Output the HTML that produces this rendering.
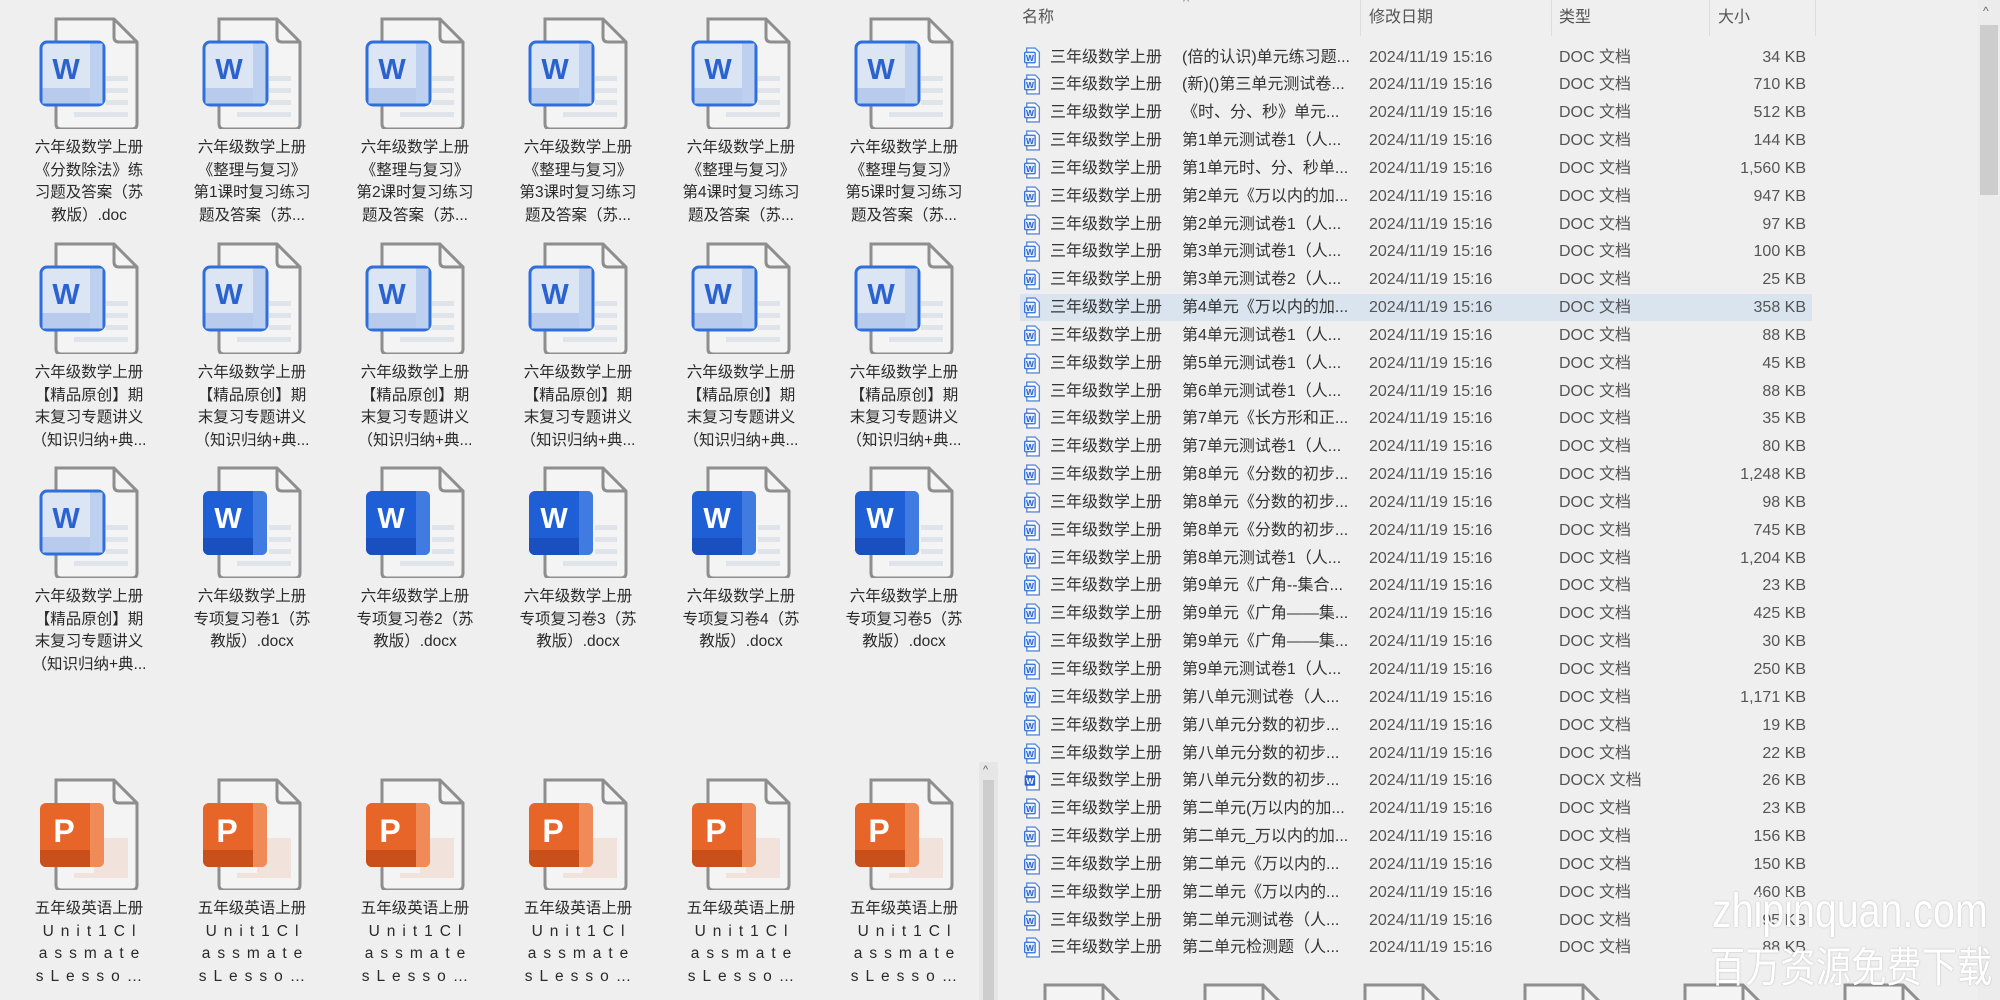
<!DOCTYPE html>
<html><head><meta charset="utf-8">
<style>
*{margin:0;padding:0;box-sizing:border-box}
html,body{width:2000px;height:1000px;overflow:hidden}
body{background:#efefef;font-family:"Liberation Sans","Noto Sans CJK SC",sans-serif;color:#222}
#wrap{position:relative;width:2000px;height:1000px;overflow:hidden}
.ic{position:absolute;width:110px;height:130px}
.lb{position:absolute;width:170px;text-align:center;font-size:15.5px;line-height:22.5px;color:#2a2a2a;white-space:nowrap}
.hd{position:absolute;top:8px;font-size:16px;color:#555;line-height:20px}
.sep{position:absolute;top:0;width:1px;height:36px;background:#dcdcdc}
.row{position:absolute;left:1020px;width:792px;height:27px;font-size:16px;color:#333}
.row span{position:absolute;top:3px;line-height:21px;height:21px;white-space:nowrap}
.row.sel{background:#d9e4ee}
.wm{position:absolute;color:#fff;text-shadow:0 0 2px rgba(0,0,0,.25);white-space:nowrap;transform-origin:0 0}
</style></head><body><div id="wrap">

<svg width="0" height="0" style="position:absolute">
<defs>
<g id="page"><path d="M22 20 H80 L103 43 V125 Q103 130 98 130 H27 Q22 130 22 125 Z" fill="#f4f4f4" stroke="#8e8e8e" stroke-width="3"/><path d="M80 20 V38 Q80 43 85 43 H103" fill="none" stroke="#8e8e8e" stroke-width="3"/></g>
<g id="lines"><rect x="72" y="77" width="22" height="5" fill="#dfe3ea"/><rect x="72" y="89" width="22" height="5" fill="#dfe3ea"/><rect x="72" y="101" width="22" height="5" fill="#dfe3ea"/><rect x="40" y="113" width="54" height="5" fill="#dfe3ea"/></g>
<g id="wold"><use href="#page"/><use href="#lines"/><rect x="7" y="43" width="63" height="63" rx="6" fill="#dbe5f4" stroke="#2f6fdc" stroke-width="3"/><rect x="8.5" y="89" width="60" height="15.5" fill="#b8cbed"/><rect x="56" y="44.5" width="12.5" height="60" fill="#bdd0ef"/><text x="32" y="80" text-anchor="middle" font-family="Liberation Sans" font-weight="bold" font-size="29" fill="#2a62cf">W</text></g>
<g id="wnew"><use href="#page"/><use href="#lines"/><rect x="6" y="43" width="64" height="64" rx="6" fill="#1f5fd6"/><rect x="6" y="90" width="64" height="17" rx="6" fill="#1a4fc0"/><rect x="6" y="90" width="64" height="8" fill="#1a4fc0"/><rect x="56" y="43" width="14" height="64" rx="5" fill="#3f7be0"/><rect x="56" y="43" width="6" height="64" fill="#3f7be0"/><text x="31" y="80" text-anchor="middle" font-family="Liberation Sans" font-weight="bold" font-size="29" fill="#fff">W</text></g>
<g id="ppt"><use href="#page"/><rect x="60" y="78" width="34" height="40" fill="#f1e2dc"/><rect x="40" y="113" width="20" height="5" fill="#f1e2dc"/><rect x="6" y="43" width="64" height="64" rx="6" fill="#e8652a"/><rect x="6" y="90" width="64" height="17" rx="6" fill="#c9501a"/><rect x="6" y="90" width="64" height="8" fill="#c9501a"/><rect x="56" y="43" width="14" height="64" rx="5" fill="#f08b58"/><rect x="56" y="43" width="6" height="64" fill="#f08b58"/><text x="30" y="82" text-anchor="middle" font-family="Liberation Sans" font-weight="bold" font-size="32" fill="#fff">P</text></g>
<g id="sm"><path d="M3 1 H11 L15 5 V19 H3 Z" fill="#fff" stroke="#5b8bd8" stroke-width="1.3"/><rect x="1" y="5" width="10" height="10" rx="1" fill="#e7eefb" stroke="#2f6fdc" stroke-width="1.2"/><text x="6" y="13.3" text-anchor="middle" font-family="Liberation Sans" font-weight="bold" font-size="8" fill="#2a62cf">W</text></g>
<g id="smn"><path d="M3 1 H11 L15 5 V19 H3 Z" fill="#fff" stroke="#5b8bd8" stroke-width="1.3"/><rect x="1" y="5" width="10" height="10" rx="1" fill="#2a62cf"/><text x="6" y="13.3" text-anchor="middle" font-family="Liberation Sans" font-weight="bold" font-size="8" fill="#fff">W</text></g>
</defs></svg>

<div id="grid"></div>

<div style="position:absolute;left:979px;top:762px;width:19px;height:238px;background:#e6e6e6"></div>
<div style="position:absolute;left:983px;top:780px;width:11px;height:220px;background:#cdcdcd"></div>
<div style="position:absolute;left:983px;top:764px;font-size:11px;line-height:12px;color:#666">^</div>

<div class="hd" style="left:1022px">名称</div>
<div style="position:absolute;left:1183px;top:-6px;font-size:13px;color:#888">^</div>
<div class="sep" style="left:1360px"></div>
<div class="hd" style="left:1369px">修改日期</div>
<div class="sep" style="left:1551px"></div>
<div class="hd" style="left:1559px">类型</div>
<div class="sep" style="left:1709px"></div>
<div class="hd" style="left:1718px">大小</div>
<div class="sep" style="left:1815px"></div>

<div id="list"></div>

<div style="position:absolute;left:1978px;top:0;width:22px;height:1000px;background:#ececec"></div>
<div style="position:absolute;left:1980px;top:25px;width:18px;height:170px;background:#cdcdcd"></div>
<div style="position:absolute;left:1983px;top:4px;font-size:12px;color:#666">^</div>

<div id="bot"></div>

<div class="wm" style="left:1712px;top:884px;font-size:48px;line-height:56px;transform:scaleX(0.82)">zhipinquan.com</div>
<div class="wm" style="left:1710px;top:938px;font-size:42px;line-height:54px;font-family:'Noto Sans CJK SC',sans-serif;transform:scaleX(0.84)">百万资源免费下载</div>

</div>
<script>
var centers=[89,252,415,578,741,904];
var rows=[
 {top:19,icons:['wold','wold','wold','wold','wold','wold'],labels:[
 ['六年级数学上册','《分数除法》练','习题及答案（苏','教版）.doc'],
 ['六年级数学上册','《整理与复习》','第1课时复习练习','题及答案（苏...'],
 ['六年级数学上册','《整理与复习》','第2课时复习练习','题及答案（苏...'],
 ['六年级数学上册','《整理与复习》','第3课时复习练习','题及答案（苏...'],
 ['六年级数学上册','《整理与复习》','第4课时复习练习','题及答案（苏...'],
 ['六年级数学上册','《整理与复习》','第5课时复习练习','题及答案（苏...']]},
 {top:244,icons:['wold','wold','wold','wold','wold','wold'],labels:null},
 {top:468,icons:['wold','wnew','wnew','wnew','wnew','wnew'],labels:[
 ['六年级数学上册','【精品原创】期','末复习专题讲义','（知识归纳+典...'],
 ['六年级数学上册','专项复习卷1（苏','教版）.docx'],
 ['六年级数学上册','专项复习卷2（苏','教版）.docx'],
 ['六年级数学上册','专项复习卷3（苏','教版）.docx'],
 ['六年级数学上册','专项复习卷4（苏','教版）.docx'],
 ['六年级数学上册','专项复习卷5（苏','教版）.docx']]},
 {top:780,icons:['ppt','ppt','ppt','ppt','ppt','ppt'],labels:'ppt'}
];
var h='';
rows.forEach(function(r,ri){
 centers.forEach(function(c,i){
  h+='<svg class="ic" style="left:'+(c-55)+'px;top:'+(r.top-20)+'px" viewBox="0 0 110 130"><use href="#'+r.icons[i]+'"/></svg>';
  var L;
  if(r.labels===null)L=['六年级数学上册','【精品原创】期','末复习专题讲义','（知识归纳+典...'];
  else if(r.labels==='ppt')L=['五年级英语上册','Unit1Cl','assmate','sLesso\u2026'];
  else L=r.labels[i];
  var t='';
  L.forEach(function(s,k){
   if(r.labels==='ppt'&&k>0)t+='<div style="letter-spacing:7px;padding-left:7px;font-size:15.5px">'+s+'</div>';
   else t+='<div>'+s+'</div>';
  });
  var hh=(L.length*22.5);
  h+='<div class="lb" style="left:'+(c-85)+'px;top:'+(r.top+118)+'px;height:'+Math.min(hh,1000-(r.top+118))+'px;overflow:hidden">'+t+'</div>';
 });
});
document.getElementById('grid').innerHTML=h;

var data=[
['(倍的认识)单元练习题...','34 KB'],['(新)()第三单元测试卷...','710 KB'],['《时、分、秒》单元...','512 KB'],['第1单元测试卷1（人...','144 KB'],['第1单元时、分、秒单...','1,560 KB'],['第2单元《万以内的加...','947 KB'],['第2单元测试卷1（人...','97 KB'],['第3单元测试卷1（人...','100 KB'],['第3单元测试卷2（人...','25 KB'],['第4单元《万以内的加...','358 KB'],['第4单元测试卷1（人...','88 KB'],['第5单元测试卷1（人...','45 KB'],['第6单元测试卷1（人...','88 KB'],['第7单元《长方形和正...','35 KB'],['第7单元测试卷1（人...','80 KB'],['第8单元《分数的初步...','1,248 KB'],['第8单元《分数的初步...','98 KB'],['第8单元《分数的初步...','745 KB'],['第8单元测试卷1（人...','1,204 KB'],['第9单元《广角--集合...','23 KB'],['第9单元《广角——集...','425 KB'],['第9单元《广角——集...','30 KB'],['第9单元测试卷1（人...','250 KB'],['第八单元测试卷（人...','1,171 KB'],['第八单元分数的初步...','19 KB'],['第八单元分数的初步...','22 KB'],['第八单元分数的初步...','26 KB'],['第二单元(万以内的加...','23 KB'],['第二单元_万以内的加...','156 KB'],['第二单元《万以内的...','150 KB'],['第二单元《万以内的...','460 KB'],['第二单元测试卷（人...','95 KB'],['第二单元检测题（人...','88 KB']];
var g='';
data.forEach(function(d,i){
 var y=Math.round(57+i*27.84-13.5);
 var dx=i==26;
 g+='<div class="row'+(i==9?' sel':'')+'" style="top:'+y+'px"><svg style="position:absolute;left:3px;top:3px" width="18" height="21" viewBox="0 0 16 20"><use href="#'+(dx?'smn':'sm')+'"/></svg><span style="left:30px">三年级数学上册</span><span style="left:162px">'+d[0]+'</span><span style="left:349px;color:#555">2024/11/19 15:16</span><span style="left:539px;color:#555">'+(dx?'DOCX 文档':'DOC 文档')+'</span><span style="right:6px;color:#555">'+d[1]+'</span></div>';
});
document.getElementById('list').innerHTML=g;

var b='';
[1078,1238,1398,1558,1718,1878].forEach(function(c){
 b+='<svg style="position:absolute;left:'+(c-55)+'px;top:965px" width="110" height="35" viewBox="0 0 110 35"><use href="#page"/></svg>';
});
document.getElementById('bot').innerHTML=b;
</script>
</body></html>
